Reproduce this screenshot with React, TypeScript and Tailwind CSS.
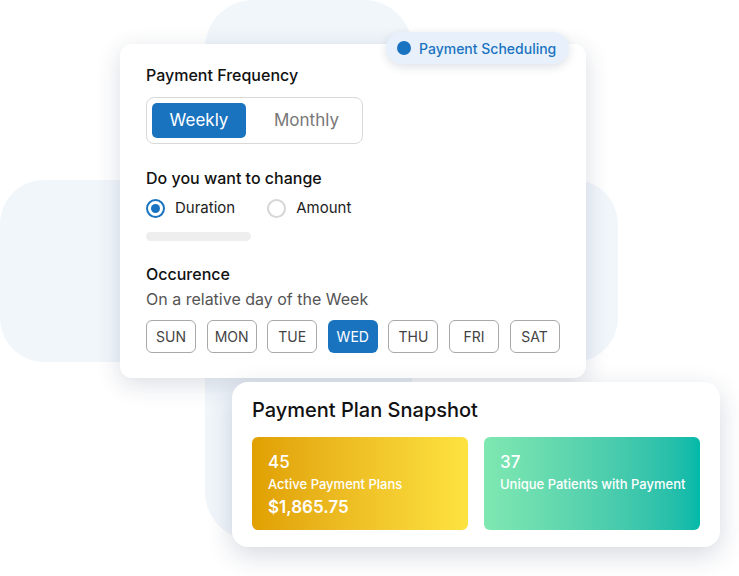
import { useState } from "react";

const DAYS = ["SUN", "MON", "TUE", "WED", "THU", "FRI", "SAT"];

function Radio({ label, checked }: { label: string; checked?: boolean }) {
  return (
    <div className="flex h-[20px] items-center gap-[10px]">
      <span
        className={`flex h-[19px] w-[19px] items-center justify-center rounded-full border-2 ${
          checked ? "border-[#1a73c0]" : "border-[#d6d6d6]"
        }`}
      >
        {checked && <span className="h-[9px] w-[9px] rounded-full bg-[#1a73c0]" />}
      </span>
      <span className="text-[15px] leading-[20px] text-[#1c1c1c]">{label}</span>
    </div>
  );
}

export default function App() {
  const [freq, setFreq] = useState("weekly");
  const [day, setDay] = useState("WED");

  return (
    <div
      className="relative h-[576px] w-[739px] overflow-hidden bg-white"
      style={{ fontFamily: "Inter, 'Noto Sans', sans-serif" }}
    >
      {/* background blobs */}
      <div className="absolute left-0 top-[180px] h-[182px] w-[618px] rounded-[44px] bg-[#f1f6fb]" />
      <div className="absolute left-[205px] top-0 h-[540px] w-[207px] rounded-[48px] bg-[#f1f6fb]" />

      {/* scheduling card */}
      <div className="absolute left-[120px] top-[44px] h-[334px] w-[466px] rounded-[12px] bg-white px-[26px] pt-[21px] shadow-[0_6px_24px_rgba(30,45,80,0.16)]">
        <div className="text-[16px] font-medium leading-[20px] text-[#111]">Payment Frequency</div>
        <div className="mt-[12px] flex h-[47px] w-[217px] items-center rounded-[8px] border border-[#d9d9d9] px-[5px]">
          <button
            onClick={() => setFreq("weekly")}
            className={`h-[35px] w-[94px] rounded-[5px] text-[17px] ${
              freq === "weekly" ? "bg-[#1a73bf] text-white" : "text-[#777]"
            }`}
          >
            Weekly
          </button>
          <button
            onClick={() => setFreq("monthly")}
            className={`h-[35px] flex-1 rounded-[5px] pl-[10px] text-[17px] ${
              freq === "monthly" ? "bg-[#1a73bf] text-white" : "text-[#777]"
            }`}
          >
            Monthly
          </button>
        </div>

        <div className="mt-[24px] text-[16px] font-medium leading-[20px] text-[#111]">
          Do you want to change
        </div>
        <div className="mt-[10px] flex items-center gap-[32px]">
          <Radio label="Duration" checked />
          <Radio label="Amount" />
        </div>
        <div className="mt-[14px] h-[9px] w-[105px] rounded-full bg-[#eeeeee]" />

        <div className="mt-[23px] text-[16px] font-medium leading-[20px] text-[#111]">Occurence</div>
        <div className="mt-[5px] text-[16px] leading-[20px] text-[#555]">On a relative day of the Week</div>
        <div className="mt-[11px] flex gap-[10.6px]">
          {DAYS.map((d) => (
            <button
              key={d}
              onClick={() => setDay(d)}
              className={`h-[33px] w-[50px] rounded-[6px] text-[14px] ${
                day === d
                  ? "bg-[#1a73bf] text-white"
                  : "border border-[#a8a8a8] text-[#444]"
              }`}
            >
              {d}
            </button>
          ))}
        </div>
      </div>

      {/* badge */}
      <div className="absolute left-[386px] top-[32px] flex h-[32px] items-center gap-[8px] rounded-full bg-[#e8f1fb] pl-[11px] pr-[13px] shadow-[0_3px_10px_rgba(30,45,80,0.14)]">
        <span className="h-[14px] w-[14px] rounded-full bg-[#1a73c0]" />
        <span className="text-[14px] font-medium text-[#1a73c0]">Payment Scheduling</span>
      </div>

      {/* snapshot card */}
      <div className="absolute left-[232px] top-[382px] h-[165px] w-[488px] rounded-[16px] bg-white px-[20px] pt-[15px] shadow-[0_8px_26px_rgba(30,45,80,0.18)]">
        <div className="text-[20px] font-medium leading-[26px] text-[#111]">Payment Plan Snapshot</div>
        <div className="mt-[14px] flex gap-[16px]">
          <div className="h-[93px] w-[216px] rounded-[6px] bg-gradient-to-r from-[#e0a000] to-[#fde33f] px-[16px] pt-[15px] text-white">
            <div className="text-[17px] font-medium leading-[20px]">45</div>
            <div className="mt-[3px] text-[13px] font-medium leading-[18px]">Active Payment Plans</div>
            <div className="mt-[3px] text-[17px] font-semibold leading-[22px]">$1,865.75</div>
          </div>
          <div className="h-[93px] w-[216px] rounded-[6px] bg-gradient-to-r from-[#7fe8b1] to-[#00b9a9] px-[16px] pt-[15px] text-white">
            <div className="text-[17px] font-medium leading-[20px]">37</div>
            <div className="mt-[3px] whitespace-nowrap text-[13px] font-medium leading-[18px]">
              Unique Patients with Payment
            </div>
          </div>
        </div>
      </div>
    </div>
  );
}
